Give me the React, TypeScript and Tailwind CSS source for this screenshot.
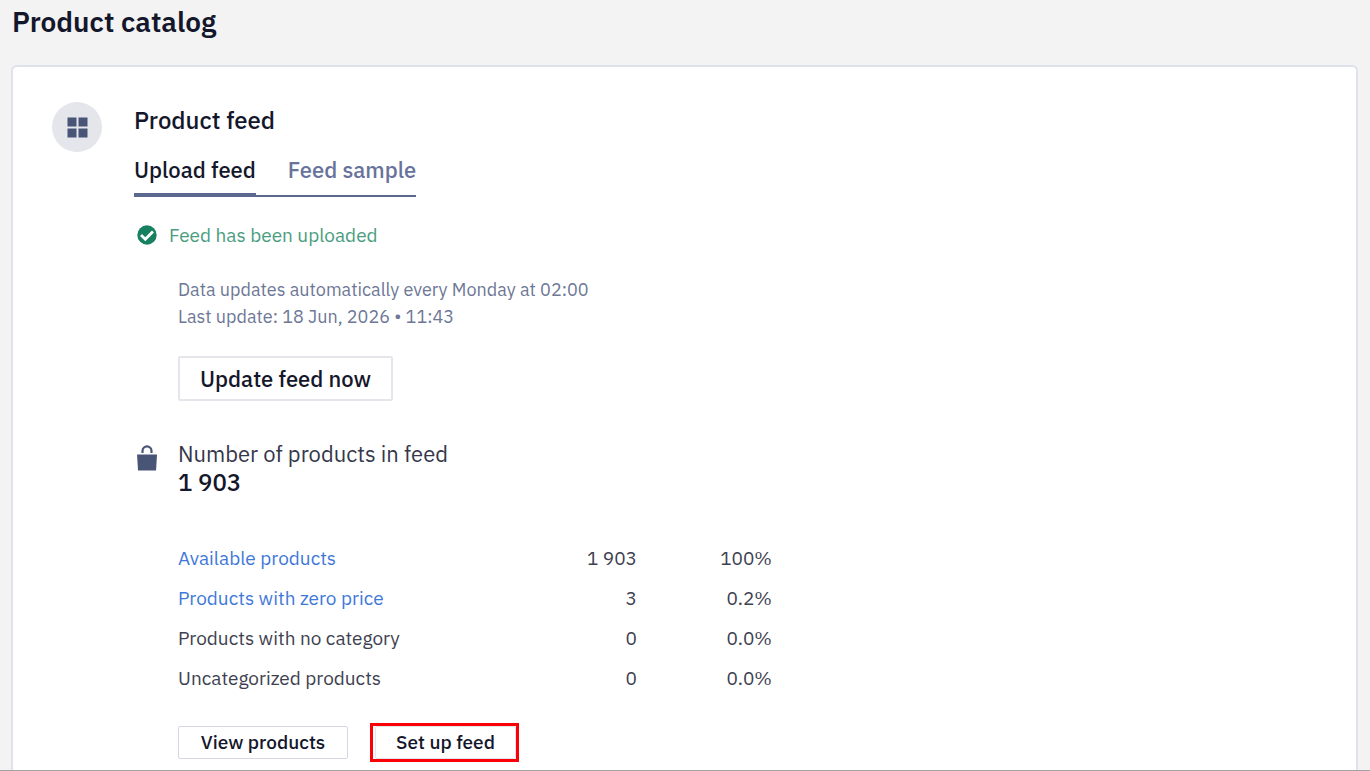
import { useState } from "react";
import clsx from "clsx";

type Tab = "upload" | "sample";

interface FeedStat {
  label: string;
  count: string;
  share: string;
  href?: string;
}

const stats: FeedStat[] = [
  { label: "Available products", count: "1 903", share: "100%", href: "#available" },
  { label: "Products with zero price", count: "3", share: "0.2%", href: "#zero-price" },
  { label: "Products with no category", count: "0", share: "0.0%" },
  { label: "Uncategorized products", count: "0", share: "0.0%" },
];

const tabs: { id: Tab; label: string }[] = [
  { id: "upload", label: "Upload feed" },
  { id: "sample", label: "Feed sample" },
];

function GridIcon() {
  return (
    <svg width="22" height="22" viewBox="0 0 22 22" fill="#495577" aria-hidden="true">
      <rect x="1.5" y="1.5" width="9" height="9" />
      <rect x="12.5" y="1.5" width="9" height="9" />
      <rect x="1.5" y="12.5" width="9" height="9" />
      <rect x="12.5" y="12.5" width="9" height="9" />
    </svg>
  );
}

function CheckIcon() {
  return (
    <svg width="20" height="20" viewBox="0 0 20 20" aria-hidden="true">
      <circle cx="10" cy="10" r="9.7" fill="#178060" />
      <path d="M4 10 8.3 14.2l7.7-7.8" fill="none" stroke="#fff" strokeWidth="2.8" />
    </svg>
  );
}

function BagIcon() {
  return (
    <svg width="20" height="26" viewBox="0 0 20 26" aria-hidden="true">
      <path d="M5.5 8V6a4.5 4.7 0 0 1 9 0v2" fill="none" stroke="#495577" strokeWidth="2.2" />
      <path d="M0 9.5h20l-1 16H1z" fill="#495577" />
    </svg>
  );
}

export default function App() {
  const [tab, setTab] = useState<Tab>("upload");

  return (
    <div className="flex min-h-screen flex-col border-b border-[#a3a3a3] bg-[#f3f3f3] font-['IBM_Plex_Sans',Roboto,sans-serif] text-[#14172b]">
      <h1 className="px-3 pt-1 text-[28px] leading-9 font-semibold">Product catalog</h1>

      <main className="mr-3 ml-[11px] mt-[25px] flex flex-1 items-start gap-8 rounded-t-md border-2 border-b-0 border-[#dfe1eb] bg-white px-[39px] pt-[35px] pb-2">
        <div className="flex size-[50px] shrink-0 items-center justify-center rounded-full bg-[#e4e6ec]">
          <GridIcon />
        </div>

        <section className="min-w-0 flex-1">
          <h2 className="text-[24px] leading-9 font-medium">Product feed</h2>

          <div role="tablist" className="mt-4 inline-flex gap-8 border-b-2 border-[#5c6890]">
            {tabs.map(({ id, label }) => (
              <button
                key={id}
                type="button"
                role="tab"
                aria-selected={tab === id}
                onClick={() => setTab(id)}
                className={clsx(
                  "border-b-2 pb-[7px] text-[22px] leading-8 font-medium",
                  tab === id ? "border-[#5c6890]" : "border-transparent text-[#67739b]"
                )}
              >
                {label}
              </button>
            ))}
          </div>

          <p className="mt-5 flex items-center gap-3 pl-[3px] text-[19px] leading-9 text-[#4a9d80]">
            <CheckIcon />
            Feed has been uploaded
          </p>

          <div className="mt-[23px] pl-11">
            <p className="text-[18px] leading-[27px] text-[#6d7796]">
              Data updates automatically every Monday at 02:00
              <br />
              Last update: 18 Jun, 2026 • 11:43
            </p>
            <button
              type="button"
              className="mt-[26px] h-[45px] rounded-xs border-2 border-[#e4e6ec] px-5 text-[22px] font-medium"
            >
              Update feed now
            </button>
          </div>

          <div className="mt-[39px] flex items-start pl-[3px]">
            <div className="w-[41px] pt-[5px]">
              <BagIcon />
            </div>
            <div>
              <h3 className="text-[22px] leading-7 text-[#343749]">Number of products in feed</h3>
              <p className="text-[24px] leading-7 font-medium">1 903</p>
            </div>
          </div>

          <div className="mt-[42px] pl-11">
            <table className="w-[594px] text-[19px] leading-10 text-[#3e4150]">
              <tbody>
                {stats.map(({ label, count, share, href }) => (
                  <tr key={label}>
                    <th scope="row" className="p-0 text-left font-normal">
                      {href ? (
                        <a href={href} className="text-[#3f78d8]">
                          {label}
                        </a>
                      ) : (
                        label
                      )}
                    </th>
                    <td className="w-[135px] p-0 text-right">{count}</td>
                    <td className="w-[135px] p-0 text-right">{share}</td>
                  </tr>
                ))}
              </tbody>
            </table>

            <div className="mt-[25px] flex items-center gap-[22px]">
              <button type="button" className="h-[33px] w-[170px] rounded-xs border border-[#d5d8e4] text-[19px] leading-none font-medium">
                View products
              </button>
              <div className="border-3 border-[#fb0007] pl-[2px]">
                <button type="button" className="h-[33px] w-[141px] rounded-xs border border-[#e4e6ec] text-[19px] leading-none font-medium">
                  Set up feed
                </button>
              </div>
            </div>
          </div>
        </section>
      </main>
    </div>
  );
}
